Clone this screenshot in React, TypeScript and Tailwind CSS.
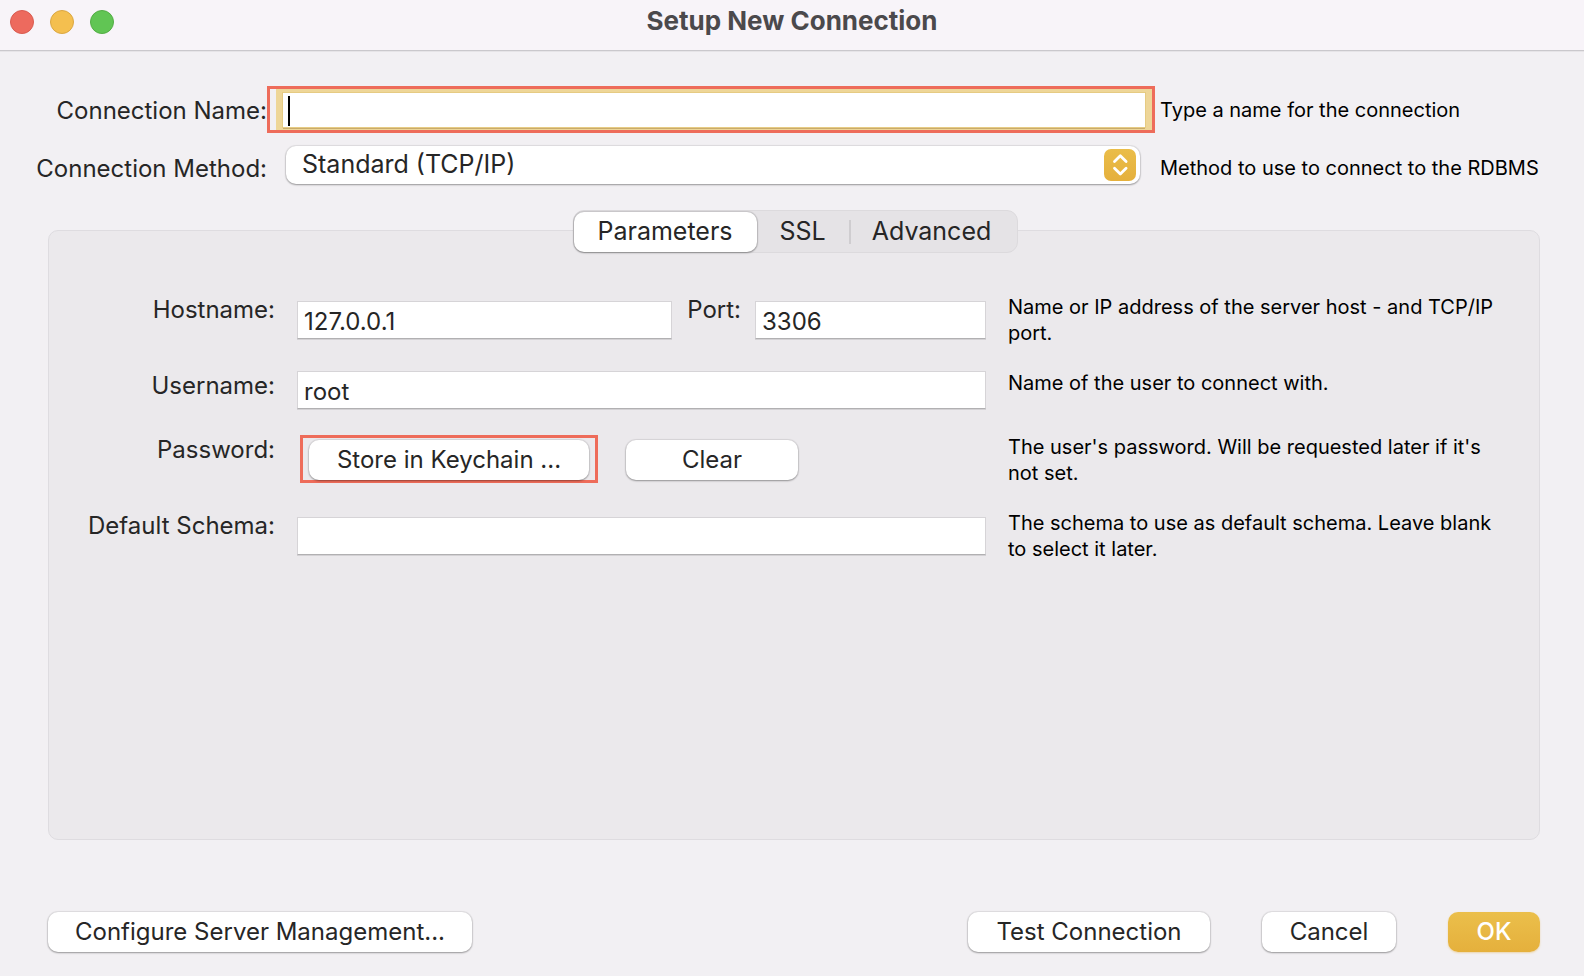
import React, { useState } from "react";

const BUTTON =
  "flex h-10 items-center justify-center rounded-[10px] bg-white text-2xl leading-8 text-[#262626] shadow-[0_0_1px_1px_rgba(0,0,0,0.08),0_1px_2px_rgba(0,0,0,0.32)]";
const LABEL = "text-right text-2xl leading-9 whitespace-nowrap text-[#262626]";
const HELP = "text-xl leading-[26px] text-black";
const FIELD =
  "h-[38px] w-full min-w-0 border border-[#d6d4d7] border-b-[#b1b0b2] bg-white px-1.5 pt-0.5 text-2xl leading-8 text-[#262626] shadow-[0_1px_0_#d3d1d4] outline-none";
const ROW = "grid grid-cols-[226px_minmax(0,1fr)_497px] gap-x-[22px] pr-[34px]";

const TABS = [
  { name: "Parameters", width: "w-[183px]" },
  { name: "SSL", width: "w-[92px]" },
  { name: "Advanced", width: "w-[166px] pr-1" },
];

function TitleBar() {
  return (
    <header className="grid h-[51px] grid-cols-[1fr_auto_1fr] border-b border-[#cac8cc] bg-[#f8f4f9] shadow-[0_1px_0_#e6e4e7]">
      <div className="flex gap-4 pt-2.5 pl-2.5">
        <button aria-label="Close" className="size-6 rounded-full border border-[#d95b50] bg-[#ed6a5e]" />
        <button aria-label="Minimize" className="size-6 rounded-full border border-[#dba742] bg-[#f4bf4f]" />
        <button aria-label="Zoom" className="size-6 rounded-full border border-[#53ad45] bg-[#61c554]" />
      </div>
      <h1 className="pt-1 text-[26px] leading-[34px] font-bold text-[#4b494c]">Setup New Connection</h1>
    </header>
  );
}

function ConnectionForm() {
  return (
    <div className="grid grid-cols-[267px_minmax(0,1fr)_424px] pt-[35px]">
      <label htmlFor="name" className={`${LABEL} pt-[7px]`}>
        Connection Name:
      </label>
      <div className="mr-[5px] h-[47px] border-[3px] border-[#ee6c5a] pl-1.5">
        <div className="relative h-full bg-[#eed698] pt-1 pr-[7px] pb-[3px] pl-[7px]">
          <input
            id="name"
            type="text"
            className="block h-full w-full bg-white px-1.5 text-2xl text-[#262626] caret-transparent shadow-[0_0_0_1px_#e6cb83,0_2px_0_#c9ab6b] outline-none"
          />
          <span className="absolute top-[7px] left-3 h-[30px] w-0.5 bg-black" />
        </div>
      </div>
      <p className={`${HELP} pt-[11px]`}>Type a name for the connection</p>

      <label htmlFor="method" className={`${LABEL} pt-[18px]`}>
        Connection Method:
      </label>
      <div className="relative mt-[13px] mr-5 ml-[19px]">
        <select
          id="method"
          className="block h-[38px] w-full appearance-none rounded-[10px] bg-white pr-12 pb-0.5 pl-4 text-[25px] text-[#262626] shadow-[0_0_1px_1px_rgba(0,0,0,0.08),0_1px_2px_rgba(0,0,0,0.32)] outline-none"
        >
          <option>Standard (TCP/IP)</option>
        </select>
        <svg className="pointer-events-none absolute top-[3px] right-1 size-8" viewBox="0 0 32 32" fill="none">
          <defs>
            <linearGradient id="gold" x1="0" y1="0" x2="0" y2="1">
              <stop offset="0" stopColor="#eabd49" />
              <stop offset="1" stopColor="#e5b03c" />
            </linearGradient>
          </defs>
          <rect width="32" height="32" rx="7" fill="url(#gold)" />
          <path
            d="M10.5 12.5 16.3 6.8 22.1 12.5M10.5 19.3 16.3 25 22.1 19.3"
            stroke="#fff"
            strokeWidth="2.8"
            strokeLinecap="round"
            strokeLinejoin="round"
          />
        </svg>
      </div>
      <p className={`${HELP} pt-[22px]`}>Method to use to connect to the RDBMS</p>
    </div>
  );
}

function TabBar() {
  const [active, setActive] = useState("Parameters");
  return (
    <div className="relative z-10 mt-[23px] -mb-[23px] flex justify-center pl-1.5">
      <div
        role="tablist"
        className="flex h-[43px] items-center rounded-[11px] border border-[#dcdadd] bg-[#e5e3e6]"
      >
        {TABS.map((tab, i) => (
          <React.Fragment key={tab.name}>
            {i === 2 && <span className="h-6 w-0.5 bg-[#cfcdd0]" />}
            <button
              role="tab"
              aria-selected={active === tab.name}
              onClick={() => setActive(tab.name)}
              className={`h-10 rounded-[10px] pb-0.5 text-[25px] leading-8 text-[#262626] ${tab.width} ${
                active === tab.name ? "bg-white shadow-[0_0_1px_1px_rgba(0,0,0,0.12),0_1px_2px_rgba(0,0,0,0.3)]" : ""
              }`}
            >
              {tab.name}
            </button>
          </React.Fragment>
        ))}
      </div>
    </div>
  );
}

function ParametersPanel() {
  return (
    <section
      role="tabpanel"
      className="mr-11 ml-12 flex-1 rounded-[10px] border border-[#dedce0] bg-[#ebe9ec] pt-[61px]"
    >
      <div className={`${ROW} h-[76px]`}>
        <label htmlFor="host" className={LABEL}>
          Hostname:
        </label>
        <div className="flex">
          <div className="min-w-0 flex-1 pt-[9px]">
            <input id="host" type="text" defaultValue="127.0.0.1" className={FIELD} />
          </div>
          <label htmlFor="port" className={`${LABEL} w-[83px] pr-3.5`}>
            Port:
          </label>
          <div className="w-[231px] pt-[9px]">
            <input id="port" type="text" defaultValue="3306" className={FIELD} />
          </div>
        </div>
        <p className={`${HELP} pt-0.5`}>Name or IP address of the server host - and TCP/IP port.</p>
      </div>

      <div className={`${ROW} h-16`}>
        <label htmlFor="user" className={LABEL}>
          Username:
        </label>
        <div className="pt-[3px]">
          <input id="user" type="text" defaultValue="root" className={FIELD} />
        </div>
        <p className={`${HELP} pt-0.5`}>Name of the user to connect with.</p>
      </div>

      <div className={`${ROW} h-[76px]`}>
        <span className={LABEL}>Password:</span>
        <div className="flex items-start gap-7 pt-[3px] pl-[3px]">
          <div className="h-12 border-[3px] border-[#ee6c5a] px-1.5 pt-0.5">
            <button className={`${BUTTON} w-[280px]`}>Store in Keychain ...</button>
          </div>
          <div className="pt-[5px]">
            <button className={`${BUTTON} w-[172px]`}>Clear</button>
          </div>
        </div>
        <p className={`${HELP} pt-0.5`}>The user's password. Will be requested later if it's not set.</p>
      </div>

      <div className={ROW}>
        <label htmlFor="schema" className={LABEL}>
          Default Schema:
        </label>
        <div className="pt-[9px]">
          <input id="schema" type="text" className={FIELD} />
        </div>
        <p className={`${HELP} pt-0.5`}>The schema to use as default schema. Leave blank to select it later.</p>
      </div>
    </section>
  );
}

export default function App() {
  return (
    <main className="flex min-h-screen flex-col bg-[#f2f0f3] font-['Inter','Liberation_Sans',sans-serif]">
      <TitleBar />
      <ConnectionForm />
      <TabBar />
      <ParametersPanel />
      <footer className="mr-11 ml-12 flex pt-[72px] pb-6">
        <button className={`${BUTTON} w-[424px]`}>Configure Server Management...</button>
        <button className={`${BUTTON} mr-[52px] ml-auto w-[242px]`}>Test Connection</button>
        <button className={`${BUTTON} mr-[52px] w-[134px]`}>Cancel</button>
        <button className="h-10 w-[92px] rounded-[10px] bg-linear-to-b from-[#ebbf4b] to-[#e5b03c] text-2xl leading-8 font-medium text-white shadow-[0_1px_2px_rgba(229,176,60,0.4)]">
          OK
        </button>
      </footer>
    </main>
  );
}
